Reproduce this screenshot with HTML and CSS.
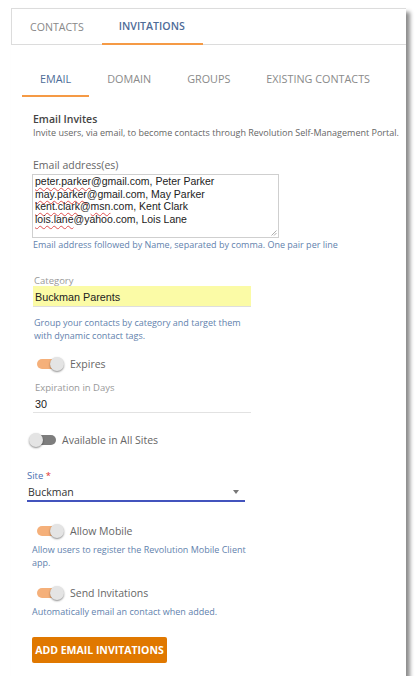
FILE: index.html
```html
<!DOCTYPE html>
<html>
<head>
<meta charset="utf-8">
<link rel="stylesheet" href="styles.css">
</head>
<body>
<div class="card">
  <div class="tabbar">
    <div class="tab">Contacts</div>
    <div class="tab active">Invitations</div>
  </div>
  <div class="subtabs">
    <div class="subtab active">Email</div>
    <div class="subtab">Domain</div>
    <div class="subtab">Groups</div>
    <div class="subtab">Existing Contacts</div>
  </div>
  <div class="content">
    <div class="title">Email Invites</div>
    <div class="desc">Invite users, via email, to become contacts through Revolution Self-Management Portal.</div>
    <div class="label">Email address(es)</div>
    <div class="textarea">
      <div><span class="sp">peter.parker</span>@gmail.com, Peter Parker</div>
      <div><span class="sp">may.parker</span>@gmail.com, May Parker</div>
      <div><span class="sp">kent.clark</span>@<span class="sp">msn</span>.com, Kent Clark</div>
      <div><span class="sp">lois.lane</span>@yahoo.com, Lois Lane</div>
      <svg class="grip" width="7" height="7" viewBox="0 0 7 7"><path d="M6.5 1.5 L1.5 6.5 M6.5 4 L4 6.5" stroke="#999" stroke-width="0.8"/></svg>
    </div>
    <div class="hint hint-ta">Email address followed by Name, separated by comma. One pair per line</div>

    <div class="flabel cat-label">Category</div>
    <div class="input yellow">Buckman Parents</div>
    <div class="hint hint-cat">Group your contacts by category and target them<br>with dynamic contact tags.</div>

    <div class="toggle-row on row-expires"><span class="switch"></span><span class="tlabel">Expires</span></div>
    <div class="flabel exp-label">Expiration in Days</div>
    <div class="input plain">30</div>

    <div class="toggle-row off row-avail"><span class="switch"></span><span class="tlabel">Available in All Sites</span></div>

    <div class="site">
      <div class="site-label">Site <span class="req">*</span></div>
      <div class="select"><span>Buckman</span><span class="caret"></span></div>
    </div>

    <div class="toggle-row on row-mobile"><span class="switch"></span><span class="tlabel">Allow Mobile</span></div>
    <div class="hint hint-sm">Allow users to register the Revolution Mobile Client<br>app.</div>

    <div class="toggle-row on row-send"><span class="switch"></span><span class="tlabel">Send Invitations</span></div>
    <div class="hint hint-sm">Automatically email an contact when added.</div>

    <button class="btn">Add Email Invitations</button>
  </div>
</div>
</body>
</html>
```

FILE: styles.css
```css
* { box-sizing: border-box; }
html, body { margin: 0; padding: 0; background: #fff; }
body { font-family: "Open Sans", "DejaVu Sans", sans-serif; color: #555; }

.card {
  margin: 8px 0 0 11px;
  width: 395px;
  height: 668px;
  background: #fff;
  box-shadow: 4px 4px 4px rgba(0,0,0,0.45);
}

.tabbar {
  display: flex;
  height: 37px;
  border: 1px solid #dcdcdc;
  border-right: none;
}
.tab {
  padding: 0 18px 0 18px;
  font-size: 10.6px;
  text-transform: uppercase;
  color: #888;
  display: flex;
  align-items: center;
  height: 35px;
}
.tab.active {
  color: #4e6c98;
  font-weight: 600;
  border-bottom: 2px solid #f59a45;
  margin-bottom: -1px;
  height: 36px;
  padding: 0 18px 0 17px;
}

.subtabs {
  display: flex;
  margin: 17px 0 0 11px;
  height: 35px;
}
.subtab {
  padding: 0 18px;
  font-size: 10.8px;
  text-transform: uppercase;
  color: #8a8a8a;
  display: flex;
  align-items: center;
  border-bottom: 2px solid transparent;
}
.subtab.active {
  color: #4e6c98;
  border-bottom-color: #f59a45;
}

.content { padding-left: 22px; }

.title {
  margin-top: 15px;
  font-size: 10.5px;
  font-weight: 600;
  color: #444;
  line-height: 14px;
}
.desc {
  font-size: 9px;
  line-height: 14px;
  color: #666;
  white-space: nowrap;
}
.label {
  margin-top: 18px;
  font-size: 10.5px;
  line-height: 14px;
  color: #666;
}
.textarea {
  position: relative;
  margin: 2px 0 0 -1px;
  width: 247px;
  height: 64px;
  border: 1px solid #cfcfcf;
  padding: 0 2px;
  font-family: "Liberation Sans", Arial, sans-serif;
  font-size: 10.5px;
  line-height: 12.5px;
  color: #222;
}
.sp {
  text-decoration: underline wavy #e05050;
  text-decoration-thickness: 1px;
  text-underline-offset: 2px;
  text-decoration-skip-ink: none;
}
.grip { position: absolute; right: 1px; bottom: 1px; }

.hint {
  font-size: 9px;
  color: #6282ad;
}
.hint-ta { margin-top: 1px; line-height: 12px; }
.hint-cat { margin-top: 9px; line-height: 13px; padding-left: 1px; }
.hint-sm { margin-top: 4px; line-height: 13px; margin-left: -1px; }

.flabel {
  font-size: 9.5px;
  color: #999;
  padding-left: 1px;
}
.cat-label { margin-top: 25px; line-height: 10px; }
.exp-label { margin-top: 10px; line-height: 12px; padding-left: 2px; }

.input {
  width: 218px;
  font-family: "Liberation Sans", Arial, sans-serif;
  font-size: 10.8px;
  color: #222;
  padding-left: 2px;
}
.yellow {
  height: 21px;
  line-height: 20px;
  background: #fbfba6;
  border-bottom: 1px solid #dedede;
  padding-top: 1px;
}
.plain {
  margin-top: 2px;
  height: 17px;
  line-height: 16px;
  border-bottom: 1px solid #e2e2e2;
}

.toggle-row {
  display: flex;
  align-items: center;
  height: 16px;
}
.switch {
  position: relative;
  width: 23px;
  height: 10px;
  border-radius: 5px;
  flex: none;
}
.switch::after {
  content: "";
  position: absolute;
  top: -2px;
  width: 14px;
  height: 14px;
  border-radius: 50%;
  background: #e4e4e4;
  box-shadow: 0 1px 2px rgba(0,0,0,0.45);
}
.on .switch { background: #f5b07a; margin-left: 4px; margin-right: 10px; }
.on .switch::after { left: 13px; }
.off .switch { background: #7d7d7d; margin-right: 6px; }
.off .switch::after { left: -4px; }
.tlabel { font-size: 10.5px; color: #666; line-height: 16px; }

.row-expires { margin-top: 14px; }
.row-avail { margin-top: 19px; }
.row-mobile { margin-top: 21px; }
.row-send { margin-top: 16px; }

.site { margin-left: -6px; margin-top: 22px; }
.site-label {
  font-size: 9.5px;
  line-height: 12px;
  color: #4a6fb0;
}
.req { color: #e0302a; }
.select {
  margin-top: 2px;
  width: 218px;
  height: 18px;
  border-bottom: 2px solid #4353bd;
  display: flex;
  align-items: center;
  justify-content: space-between;
  font-size: 10.5px;
  line-height: 16px;
  color: #333;
  padding: 0 6px 0 1px;
}
.caret {
  width: 0;
  height: 0;
  border-left: 3.5px solid transparent;
  border-right: 3.5px solid transparent;
  border-top: 4px solid #777;
}

.btn {
  display: block;
  margin: 19px 0 0 -1px;
  width: 135px;
  height: 26px;
  border: none;
  border-radius: 2px;
  background: #e07800;
  color: #fff;
  font-family: "Open Sans", sans-serif;
  font-weight: 700;
  font-size: 10.5px;
  text-transform: uppercase;
  padding: 0;
}
```
